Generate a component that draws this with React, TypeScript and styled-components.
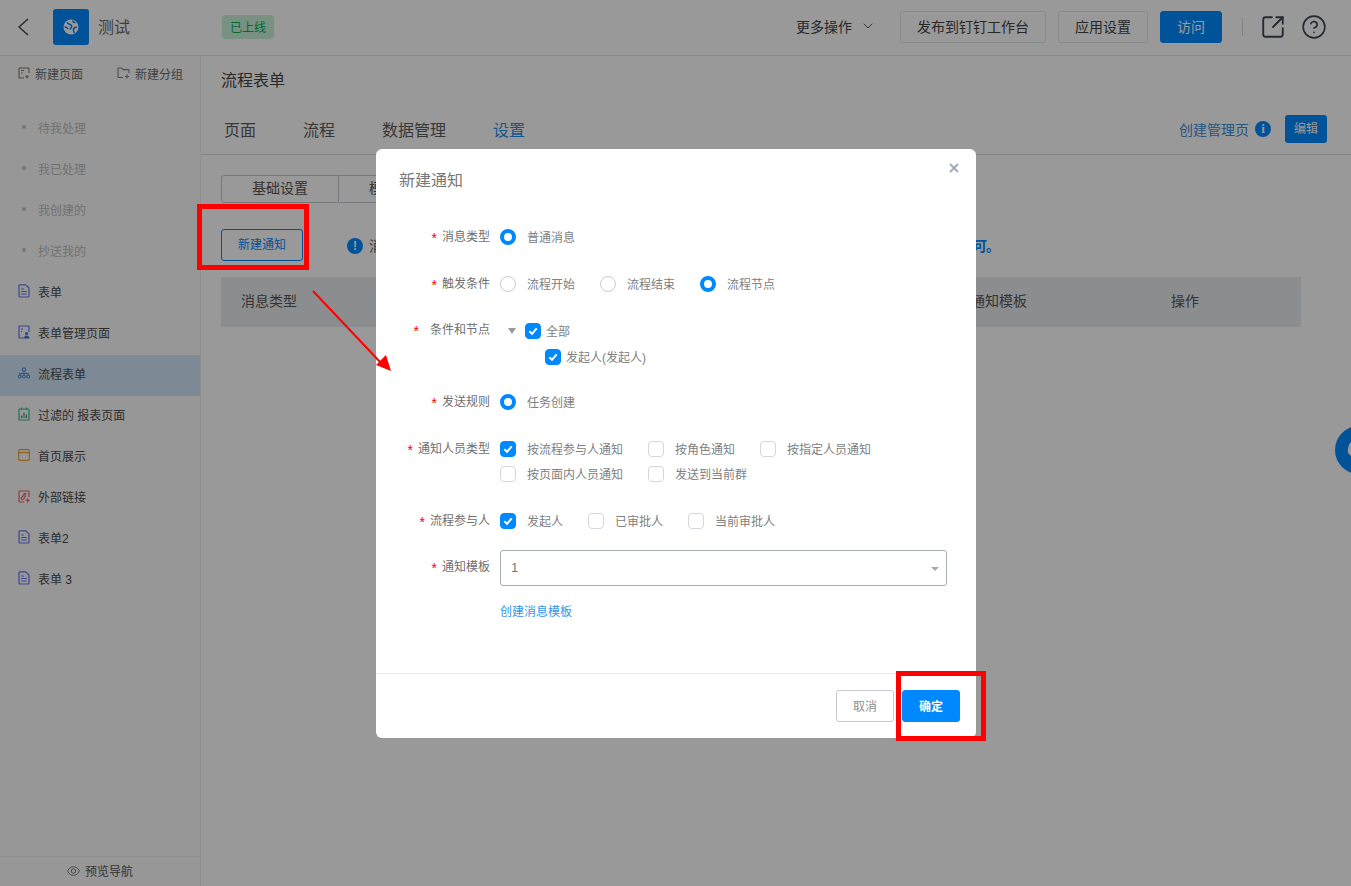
import React from "react";
import styled, { createGlobalStyle } from "styled-components";
import { ChevronDown, CircleHelp, SquareArrowOutUpRight } from "lucide-react";

const Global = createGlobalStyle`
  html, body { margin: 0; padding: 0; height: 100%; }
  body { font-family: "Liberation Sans", "Noto Sans CJK SC", sans-serif; background: #fff; color: #333; }
  * { box-sizing: border-box; }
`;

const Page = styled.div`
  position: relative; width: 1351px; height: 886px; overflow: hidden; display: flex; flex-direction: column; background: #fff;
`;
const Header = styled.header`
  height: 56px; flex: none; display: flex; align-items: center; border-bottom: 1px solid #e6e7ea; padding: 0 24px 1px 17px;
`;
const Logo = styled.div`
  width: 36px; height: 36px; margin-left: 24px; border-radius: 3px; background: #0089ff; display: flex; align-items: center; justify-content: center;
`;
const AppName = styled.span`font-size: 16px; color: #6b6b6b; margin-left: 9px; width: 124px; padding-bottom: 2px;`;
const Badge = styled.span`
  width: 52px; height: 24px; border-radius: 4px; background: #c8f2da; color: #00b050; font-size: 12px; padding-bottom: 2px; display: flex; align-items: center; justify-content: center;
`;
const Spacer = styled.div`flex: 1;`;
const MoreMenu = styled.div`
  display: flex; align-items: center; gap: 8px; font-size: 14px; color: #444; margin-right: 24px; padding-bottom: 2px;
`;
const HeadButton = styled.button<{ $primary?: boolean; $w: number }>`
  width: ${(p) => p.$w}px; height: 32px; margin-left: 12px; border-radius: 3px; font: inherit; font-size: 14px; padding: 0 0 2px;
  border: 1px solid ${(p) => (p.$primary ? "#0089ff" : "#e3e4e8")};
  background: ${(p) => (p.$primary ? "#0089ff" : "#fff")};
  color: ${(p) => (p.$primary ? "#fff" : "#444")};
  &:first-of-type { margin-left: 0; }
`;
const HeadDivider = styled.div`width: 1px; height: 18px; background: #d8d9dd; margin: 0 17px 0 20px;`;
const HeadIcons = styled.div`display: flex; align-items: center; gap: 15px; color: #3c4554;`;

const Body = styled.div`flex: 1; min-height: 0; display: flex;`;
const Sidebar = styled.aside`
  width: 201px; flex: none; display: flex; flex-direction: column; border-right: 1px solid #f0f0f1; background: #fcfcfc;
`;
const SideTools = styled.div`
  height: 36px; display: flex; align-items: center; padding: 0 0 2px 18px; font-size: 12px; color: #6a6a6a; gap: 34px; margin-bottom: 17px;
`;
const SideTool = styled.span`display: flex; align-items: center; gap: 5px;`;
const Nav = styled.nav`flex: 1;`;
const NavItem = styled.div<{ $active?: boolean; $muted?: boolean }>`
  height: 41px; display: flex; align-items: center; padding: 0 0 5px 18px; gap: 8px; font-size: 12px;
  color: ${(p) => (p.$muted ? "#bdbdbd" : "#4a4a4a")};
  background: ${(p) => (p.$active ? "#d1e6f9" : "transparent")};
`;
const Dot = styled.i`width: 4px; height: 4px; border-radius: 50%; background: #c4c4c4; margin: 0 4px;`;
const SideFooter = styled.div`
  height: 30px; border-top: 1px solid #ebebec; display: flex; align-items: center; justify-content: center; gap: 5px; font-size: 12px; color: #555; padding-bottom: 2px;
`;

const Main = styled.main`flex: 1; min-width: 0; display: flex; flex-direction: column;`;
const Title = styled.div`height: 48px; display: flex; align-items: center; padding: 0 0 2px 20px; font-size: 16px; color: #444;`;
const TabBar = styled.div`
  height: 51px; display: flex; align-items: center; gap: 47px; padding: 0 24px 1px 23px; border-bottom: 1px solid #dcdde0;
`;
const Tab = styled.span<{ $active?: boolean }>`font-size: 16px; color: ${(p) => (p.$active ? "#1f8fe8" : "#5c5c5c")};`;
const ManageLink = styled.span`font-size: 14px; color: #3d8fd6;`;
const InfoDot = styled.span`
  width: 16px; height: 16px; flex: none; border-radius: 50%; background: #0089ff; color: #fff; font: bold 13px/16px "Liberation Serif", serif; text-align: center;
`;
const EditButton = styled.button`
  width: 42px; height: 28px; margin-left: 8px; border: 0; border-radius: 3px; background: #0089ff; color: #fff; font: inherit; font-size: 12px; padding: 0 0 2px;
`;
const ManageGroup = styled.div`display: flex; align-items: center; gap: 6px; margin-left: auto;`;
const Content = styled.div`padding: 20px 50px 0 20px;`;
const Segments = styled.div`display: flex; height: 28px;`;
const Segment = styled.div<{ $first?: boolean }>`
  width: 118px; display: flex; align-items: center; font-size: 14px; color: #555; padding: 0 0 4px 30px;
  border: 1px solid #c6c8ce; border-left-width: ${(p) => (p.$first ? 1 : 0)}px;
  border-radius: ${(p) => (p.$first ? "3px 0 0 3px" : "0")};
`;
const InfoRow = styled.div`display: flex; align-items: center; margin-top: 26px; height: 32px;`;
const NewButton = styled.button`
  width: 82px; height: 32px; border: 1px solid #0089ff; border-radius: 3px; background: #fff; color: #0089ff; font: inherit; font-size: 12px; padding: 0 0 3px; margin-right: 44px;
`;
const InfoText = styled.div`
  width: 630px; margin-left: 6px; display: flex; justify-content: space-between; font-size: 14px; white-space: nowrap; color: #666;
`;
const InfoLink = styled.span`color: #0089ff; font-weight: 700; letter-spacing: -1px;`;
const InfoCircle = styled(InfoDot)`font: bold 12px/16px "Liberation Sans", sans-serif; margin-top: 2px;`;
const TableHead = styled.div`
  margin-top: 16px; height: 50px; background: #e9ebef; display: grid; grid-template-columns: 730px 200px 1fr; align-items: center; font-size: 14px; color: #555; padding-bottom: 4px;
`;
const HeadCell = styled.span`padding-left: 20px;`;
const FloatBall = styled.div`
  position: absolute; left: 1335px; top: 426px; width: 48px; height: 48px; border-radius: 50%; background: #0089ff;
`;
const BallMark = styled.svg`position: absolute; left: 11px; top: 13px;`;

const Overlay = styled.div`position: absolute; inset: 0; background: rgba(0, 0, 0, 0.4);`;
const Modal = styled.div`
  position: absolute; left: 376px; top: 149px; width: 600px; height: 589px; border-radius: 6px; background: #fff; display: flex; flex-direction: column;
`;
const ModalTitle = styled.div`padding: 21px 23px 0; height: 76px; font-size: 16px; line-height: 22px; color: #777;`;
const CloseMark = styled.svg`position: absolute; right: 17px; top: 14px;`;
const Form = styled.div`flex: 1;`;
const Row = styled.div<{ $mt?: number; $h: number }>`
  display: grid; grid-template-columns: 114px 1fr; column-gap: 10px; min-height: ${(p) => p.$h}px; margin-top: ${(p) => p.$mt ?? 23}px; padding-right: 29px;
`;
const Label = styled.div<{ $gap?: number; $lh: number }>`
  display: flex; justify-content: flex-end; gap: ${(p) => p.$gap ?? 5}px; font-size: 12px; line-height: ${(p) => p.$lh}px; height: ${(p) => p.$lh}px; color: #6e6e6e;
`;
const Star = styled.span<{ $lh: number }>`color: #f00; font-size: 14px; line-height: ${(p) => p.$lh + 2}px;`;
const Options = styled.div<{ $gap?: number }>`display: flex; flex-wrap: wrap; column-gap: ${(p) => p.$gap ?? 25}px; row-gap: 1px; align-content: flex-start;`;
const Option = styled.label<{ $w?: number }>`
  display: flex; align-items: center; gap: 11px; height: 24px; font-size: 12px; color: #808080; width: ${(p) => (p.$w ? `${p.$w}px` : "auto")};
`;
const OptionText = styled.span`margin-top: -2px;`;
const Radio = styled.span<{ $on?: boolean }>`
  width: 16px; height: 16px; border-radius: 50%; flex: none;
  border: ${(p) => (p.$on ? "4.5px solid #0089ff" : "1px solid #c9ced6")};
`;
const Box = styled.span<{ $on?: boolean }>`
  width: 16px; height: 16px; flex: none; border-radius: 4px; display: flex; align-items: center; justify-content: center;
  background: ${(p) => (p.$on ? "#0089ff" : "#fff")};
  border: 1px solid ${(p) => (p.$on ? "#0089ff" : "#d4d7dd")};
`;
const TreeLine = styled.div<{ $indent: number }>`
  display: flex; align-items: center; gap: 5px; height: 26px; font-size: 12px; color: #808080; padding-left: ${(p) => p.$indent}px;
`;
const Caret = styled.i`
  width: 0; height: 0; border-left: 4px solid transparent; border-right: 4px solid transparent; border-top: 6px solid #999; margin-right: 4px;
`;
const Select = styled.div`
  height: 36px; border: 1px solid #a9adb8; border-radius: 3px; display: flex; align-items: center; justify-content: space-between; padding: 0 7px 2px 10px; font-size: 13px; color: #777;
`;
const SelectCaret = styled(Caret)`border-top: 4px solid #a5a8b0; margin: 3px 0 0;`;
const LinkRow = styled.div`margin: 18px 0 0 124px; font-size: 12px; color: #2f97e8; line-height: 16px;`;
const ModalFooter = styled.div`
  height: 65px; flex: none; border-top: 1px solid #e8e9eb; display: flex; justify-content: flex-end; gap: 8px; padding: 16px 16px 0 0;
`;
const FootButton = styled.button<{ $primary?: boolean }>`
  width: 58px; height: 32px; border-radius: 3px; font: inherit; font-size: 12px; padding: 0 0 2px;
  font-weight: ${(p) => (p.$primary ? 700 : 400)};
  border: 1px solid ${(p) => (p.$primary ? "#0089ff" : "#c6c9cf")};
  background: ${(p) => (p.$primary ? "#0089ff" : "#fff")};
  color: ${(p) => (p.$primary ? "#fff" : "#8f8f8f")};
`;
const Marker = styled.div<{ $l: number; $t: number; $w: number; $h: number }>`
  position: absolute; left: ${(p) => p.$l}px; top: ${(p) => p.$t}px; width: ${(p) => p.$w}px; height: ${(p) => p.$h}px; border: 5px solid #f00;
`;
const Arrow = styled.svg`position: absolute; left: 300px; top: 280px;`;

const Check = () => (
  <svg width="12" height="12" viewBox="0 0 12 12" fill="none">
    <path d="M2.4 6.3 5 8.9 9.7 3.4" stroke="#fff" strokeWidth="2" />
  </svg>
);
const BackIcon = () => (
  <svg width="12" height="18" viewBox="0 0 12 18" fill="none" stroke="#444" strokeWidth="1.4">
    <path d="M11 1 2 9l9 8" />
  </svg>
);
const DocIcon = ({ c = "#6478ee" }: { c?: string }) => (
  <svg width="12" height="14" viewBox="0 0 12 14" fill="none" stroke={c} strokeWidth="1.2">
    <path d="M1 1.6c0-.4.3-.7.7-.7h6L11 4v8.3c0 .4-.3.7-.7.7H1.7c-.4 0-.7-.3-.7-.7z" />
    <path d="M3.2 5h2.6M3.2 7.5h5.6M3.2 10h5.6" />
  </svg>
);
const ManageIcon = () => (
  <svg width="12" height="14" viewBox="0 0 12 14" fill="none" stroke="#6f6cf0" strokeWidth="1.2">
    <path d="M6 13H1.7c-.4 0-.7-.3-.7-.7V1.7c0-.4.3-.7.7-.7h8.6c.4 0 .7.3.7.7V7" />
    <path d="M3 4h2M3 6.5h1" />
    <circle cx="8.6" cy="8.4" r="1.5" fill="#3f6fe0" stroke="none" />
    <path d="M6 13.6c0-2 1.2-3 2.6-3s2.8 1 2.8 3z" fill="#3f6fe0" stroke="none" />
  </svg>
);
const FlowIcon = () => (
  <svg width="12" height="12" viewBox="0 0 13 13" fill="none" stroke="#3f8be8" strokeWidth="1.1">
    <circle cx="6.5" cy="2.6" r="1.8" />
    <circle cx="2" cy="10.4" r="1.5" />
    <circle cx="6.5" cy="10.4" r="1.5" />
    <circle cx="11" cy="10.4" r="1.5" />
    <path d="M2 8.8V7h9v1.8M6.5 4.4v4.4" />
  </svg>
);
const ReportIcon = () => (
  <svg width="12" height="14" viewBox="0 0 12 14" fill="none" stroke="#34bb8c" strokeWidth="1.2">
    <rect x="1" y="2" width="10" height="11" rx="1" />
    <path d="M3.5.5V3M8.5.5V3" />
    <path d="M3.6 11V8.6M6 11V5.5M8.4 11V7.5" stroke="#2a9a76" />
  </svg>
);
const HomeIcon = () => (
  <svg width="12" height="12" viewBox="0 0 12 12" fill="none" stroke="#eda23c" strokeWidth="1.2">
    <rect x=".7" y=".7" width="10.6" height="10.6" rx="1" />
    <path d="M.7 3.6h10.6" />
  </svg>
);
const LinkIcon = () => (
  <svg width="12" height="13" viewBox="0 0 12 13" fill="none" stroke="#ee6a6a" strokeWidth="1.2">
    <path d="M6 12H1.7c-.4 0-.7-.3-.7-.7V1.7c0-.4.3-.7.7-.7h8.6c.4 0 .7.3.7.7V7" />
    <path d="M3.5 7.5 5 6a1.2 1.2 0 0 1 1.7 1.7M8.2 3.7 6.8 5.2M8.2 3.7a1.2 1.2 0 0 0-1.7 0L5 5.2M3.5 7.5a1.2 1.2 0 0 0 1.7 1.7l1.5-1.5" />
    <path d="M9.7 8.4v4M7.7 10.4h4" />
  </svg>
);
const NewPageIcon = () => (
  <svg width="12" height="12" viewBox="0 0 12 12" fill="none" stroke="#8a7a66" strokeWidth="1.1">
    <path d="M6 11H1.6c-.3 0-.6-.3-.6-.6V1.6c0-.3.3-.6.6-.6h8.8c.3 0 .6.3.6.6V6" />
    <path d="M3 3.5h3M3 6h1.5M9 8v3.600M7.200 9.800h3.600" />
  </svg>
);
const NewGroupIcon = () => (
  <svg width="13" height="12" viewBox="0 0 13 12" fill="none" stroke="#7d7d85" strokeWidth="1.1">
    <path d="M6 10.500H1.600c-.3 0-.6-.3-.6-.6V1.600c0-.3.3-.6.6-.6h3L6 2.600h5.400c.3 0 .6.3.6.6V6" />
    <path d="M10 7.500v4M8 9.500h4" />
  </svg>
);
const EyeIcon = () => (
  <svg width="13" height="10" viewBox="0 0 13 10" fill="none" stroke="#7d7d7d" strokeWidth="1">
    <path d="M.6 5C2 2 4 .7 6.500.7S11 2 12.400 5C11 8 9 9.300 6.500 9.300S2 8 .6 5z" />
    <circle cx="6.500" cy="5" r="2.200" />
  </svg>
);
const LogoMark = () => (
  <svg width="16" height="16" viewBox="0 0 16 16">
    <circle cx="8" cy="8" r="7.500" fill="#fff" />
    <path d="M4 3.500c1.500 2 3.500 1.500 4.500 3s-1 2.500-1.500 4M10 1.500c-.5 1.500 1 2 2.500 2M14 8.500c-1.500-.5-3 0-3.500 1.500S11 13 11.500 14M1.500 8c1.500 0 3 .5 3.500 2" fill="none" stroke="#0089ff" strokeWidth="1.500" />
  </svg>
);

const sideItems: { label: string; icon?: React.ReactNode; active?: boolean }[] = [
  { label: "待我处理" },
  { label: "我已处理" },
  { label: "我创建的" },
  { label: "抄送我的" },
  { label: "表单", icon: <DocIcon /> },
  { label: "表单管理页面", icon: <ManageIcon /> },
  { label: "流程表单", icon: <FlowIcon />, active: true },
  { label: "过滤的 报表页面", icon: <ReportIcon /> },
  { label: "首页展示", icon: <HomeIcon /> },
  { label: "外部链接", icon: <LinkIcon /> },
  { label: "表单2", icon: <DocIcon /> },
  { label: "表单 3", icon: <DocIcon /> },
];

const FieldLabel = ({ text, gap, lh = 24 }: { text: string; gap?: number; lh?: number }) => (
  <Label $gap={gap} $lh={lh}>
    <Star $lh={lh}>*</Star>
    <span>{text}</span>
  </Label>
);
const RadioOption = ({ text, on, w }: { text: string; on?: boolean; w?: number }) => (
  <Option $w={w}>
    <Radio $on={on} />
    <OptionText>{text}</OptionText>
  </Option>
);
const CheckOption = ({ text, on }: { text: string; on?: boolean }) => (
  <Option>
    <Box $on={on}>{on && <Check />}</Box>
    <OptionText>{text}</OptionText>
  </Option>
);

export default function App() {
  return (
    <Page>
      <Global />
      <Header>
        <BackIcon />
        <Logo>
          <LogoMark />
        </Logo>
        <AppName>测试</AppName>
        <Badge>已上线</Badge>
        <Spacer />
        <MoreMenu>
          更多操作
          <ChevronDown size={16} strokeWidth={1.5} color="#555" />
        </MoreMenu>
        <HeadButton $w={146}>发布到钉钉工作台</HeadButton>
        <HeadButton $w={90}>应用设置</HeadButton>
        <HeadButton $w={62} $primary>访问</HeadButton>
        <HeadDivider />
        <HeadIcons>
          <SquareArrowOutUpRight size={26} strokeWidth={1.7} />
          <CircleHelp size={26} strokeWidth={1.5} />
        </HeadIcons>
      </Header>
      <Body>
        <Sidebar>
          <SideTools>
            <SideTool><NewPageIcon />新建页面</SideTool>
            <SideTool><NewGroupIcon />新建分组</SideTool>
          </SideTools>
          <Nav>
            {sideItems.map((it) => (
              <NavItem key={it.label} $active={it.active} $muted={!it.icon}>
                {it.icon ?? <Dot />}
                {it.label}
              </NavItem>
            ))}
          </Nav>
          <SideFooter>
            <EyeIcon />
            预览导航
          </SideFooter>
        </Sidebar>
        <Main>
          <Title>流程表单</Title>
          <TabBar>
            <Tab>页面</Tab>
            <Tab>流程</Tab>
            <Tab>数据管理</Tab>
            <Tab $active>设置</Tab>
            <ManageGroup>
              <ManageLink>创建管理页</ManageLink>
              <InfoDot>i</InfoDot>
              <EditButton>编辑</EditButton>
            </ManageGroup>
          </TabBar>
          <Content>
            <Segments>
              <Segment $first>基础设置</Segment>
              <Segment>模</Segment>
            </Segments>
            <InfoRow>
              <NewButton>新建通知</NewButton>
              <InfoCircle>!</InfoCircle>
              <InfoText>
                <span>消</span>
                <InfoLink>可。</InfoLink>
              </InfoText>
            </InfoRow>
            <TableHead>
              <HeadCell>消息类型</HeadCell>
              <HeadCell>通知模板</HeadCell>
              <HeadCell>操作</HeadCell>
            </TableHead>
          </Content>
        </Main>
      </Body>
      <FloatBall>
        <BallMark width="20" height="22" viewBox="0 0 20 22" fill="none">
          <path d="M2 14C1 8 4 3 7 1c-1 4 1 6 1 10s-2 5-3 6z" fill="#fff" />
        </BallMark>
      </FloatBall>
      <Overlay />
      <Modal>
        <ModalTitle>新建通知</ModalTitle>
        <CloseMark width="10" height="10" viewBox="0 0 10 10" stroke="#a4abb6" strokeWidth="2">
          <path d="M1 1l8 8M9 1l-8 8" />
        </CloseMark>
        <Form>
          <Row $mt={0} $h={24}>
            <FieldLabel text="消息类型" />
            <Options><RadioOption text="普通消息" on /></Options>
          </Row>
          <Row $h={24}>
            <FieldLabel text="触发条件" />
            <Options $gap={0}>
              <RadioOption text="流程开始" w={100} />
              <RadioOption text="流程结束" w={100} />
              <RadioOption text="流程节点" on w={100} />
            </Options>
          </Row>
          <Row $mt={22} $h={52}>
            <FieldLabel text="条件和节点" gap={11} />
            <div>
              <TreeLine $indent={8}>
                <Caret />
                <Box $on><Check /></Box>
                <OptionText>全部</OptionText>
              </TreeLine>
              <TreeLine $indent={45}>
                <Box $on><Check /></Box>
                <OptionText>发起人(发起人)</OptionText>
              </TreeLine>
            </div>
          </Row>
          <Row $mt={20} $h={24}>
            <FieldLabel text="发送规则" />
            <Options><RadioOption text="任务创建" on /></Options>
          </Row>
          <Row $h={49}>
            <FieldLabel text="通知人员类型" />
            <Options>
              <CheckOption text="按流程参与人通知" on />
              <CheckOption text="按角色通知" />
              <CheckOption text="按指定人员通知" />
              <CheckOption text="按页面内人员通知" />
              <CheckOption text="发送到当前群" />
            </Options>
          </Row>
          <Row $h={24}>
            <FieldLabel text="流程参与人" />
            <Options>
              <CheckOption text="发起人" on />
              <CheckOption text="已审批人" />
              <CheckOption text="当前审批人" />
            </Options>
          </Row>
          <Row $mt={17} $h={36}>
            <FieldLabel text="通知模板" lh={34} />
            <Select>
              1
              <SelectCaret />
            </Select>
          </Row>
          <LinkRow>创建消息模板</LinkRow>
        </Form>
        <ModalFooter>
          <FootButton>取消</FootButton>
          <FootButton $primary>确定</FootButton>
        </ModalFooter>
      </Modal>
      <Marker $l={197} $t={204} $w={112} $h={66} />
      <Marker $l={896} $t={671} $w={90} $h={70} />
      <Arrow width="100" height="100" viewBox="0 0 100 100">
        <path d="M13 11 82 84" stroke="#f00" strokeWidth="2" />
        <path d="M91 91 76 85 86 75z" fill="#f00" />
      </Arrow>
    </Page>
  );
}
